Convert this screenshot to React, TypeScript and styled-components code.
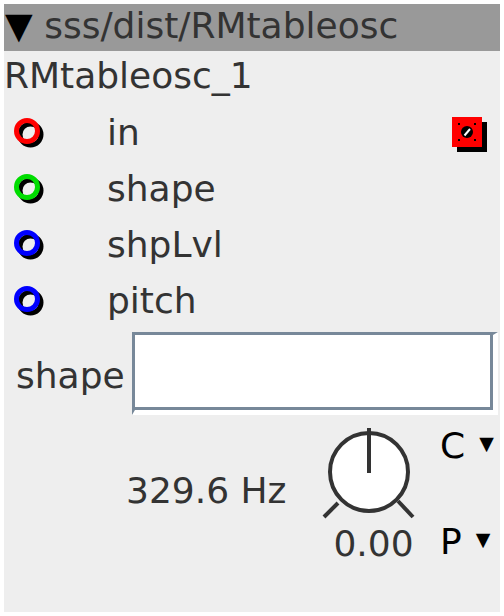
import React from "react";
import styled, { createGlobalStyle } from "styled-components";

const Global = createGlobalStyle`
  html, body { margin: 0; padding: 0; background: #ffffff; }
  body { font-family: "DejaVu Sans", "Liberation Sans", sans-serif; }
`;

const Page = styled.div`
  padding: 4px;
`;

const Panel = styled.div`
  width: 496px;
  height: 608px;
  background: #eeeeee;
  display: flex;
  flex-direction: column;
  font-family: "DejaVu Sans", sans-serif;
  font-size: 36px;
  color: #333333;
`;

const Header = styled.div`
  height: 47px;
  line-height: 43px;
  background: #999999;
  padding-left: 1px;
  white-space: nowrap;
`;

const Caret = styled.span`
  color: #000000;
`;

const InstanceName = styled.div`
  height: 54px;
  line-height: 49px;
  padding-left: 0;
`;

const PortRow = styled.div`
  height: 56px;
  display: flex;
  align-items: center;
  padding-left: 9px;
  position: relative;
`;

const PortLabel = styled.span`
  margin-left: 60px;
  line-height: 56px;
`;

const RingSvg = styled.svg`
  width: 34px;
  height: 34px;
  flex: none;
  position: relative;
  top: 1px;
`;

const OutletSvg = styled.svg`
  position: absolute;
  right: 12px;
  top: 12px;
  width: 36px;
  height: 36px;
`;

const InputRow = styled.div`
  display: flex;
  align-items: center;
  margin-top: 3px;
  padding-left: 12px;
`;

const InputLabel = styled.span`
  width: 116px;
  line-height: 40px;
  position: relative;
  top: 2px;
`;

const TextBox = styled.div`
  width: 358px;
  height: 75px;
  background: #ffffff;
  border-top: 3px solid #778899;
  border-left: 3px solid #778899;
  border-right: 5px solid #ffffff;
  border-bottom: 5px solid #ffffff;
  box-shadow: inset -3px -3px 0 0 #778899;
`;

const BottomRow = styled.div`
  display: flex;
  align-items: flex-start;
  padding-left: 122px;
  margin-top: 9px;
`;

const Freq = styled.div`
  width: 193px;
  line-height: 40px;
  margin-top: 47px;
  white-space: nowrap;
`;

const KnobCol = styled.div`
  width: 100px;
  display: flex;
  flex-direction: column;
  align-items: center;
`;

const KnobSvg = styled.svg`
  width: 100px;
  height: 96px;
  display: block;
`;

const KnobValue = styled.div`
  line-height: 40px;
  margin-top: 4px;
  padding-left: 9px;
`;

const SelCol = styled.div`
  margin-left: 21px;
  display: flex;
  flex-direction: column;
  gap: 56px;
  margin-top: 2px;
  color: #000000;
`;

const Sel = styled.div`
  line-height: 40px;
  white-space: nowrap;
  display: flex;
  align-items: flex-start;
`;

const SelArrow = styled.span`
  font-size: 19px;
  line-height: 19px;
  margin-left: 14px;
  margin-top: 8px;
`;

type Port = { name: string; color: string };

const ports: Port[] = [
  { name: "in", color: "#ff0000" },
  { name: "shape", color: "#00dd00" },
  { name: "shpLvl", color: "#0000ff" },
  { name: "pitch", color: "#0000ff" },
];

function Ring({ color }: { color: string }) {
  return (
    <RingSvg viewBox="0 0 34 34">
      <circle cx="17.5" cy="17.5" r="10.5" fill="none" stroke="#000" strokeWidth="5" />
      <circle cx="14" cy="14" r="10.5" fill="none" stroke={color} strokeWidth="5" />
    </RingSvg>
  );
}

function Outlet() {
  return (
    <OutletSvg viewBox="0 0 36 36">
      <rect x="5" y="5" width="30" height="30" fill="#000" />
      <rect x="0" y="0" width="30" height="30" fill="#ff0000" />
      <circle cx="15" cy="15" r="6" fill="#000" />
      <path d="M12.5 18.5 L18 12" stroke="#fff" strokeWidth="2" />
      <rect x="6" y="6" width="2" height="2" fill="#000" />
      <rect x="22" y="6" width="2" height="2" fill="#000" />
      <rect x="6" y="22" width="2" height="2" fill="#000" />
      <rect x="22" y="22" width="2" height="2" fill="#000" />
    </OutletSvg>
  );
}

function Knob() {
  return (
    <KnobSvg viewBox="0 0 100 96">
      <circle cx="50" cy="48" r="39" fill="#fff" stroke="#333" strokeWidth="4" />
      <line x1="50" y1="4" x2="50" y2="49" stroke="#333" strokeWidth="4" />
      <line x1="19" y1="79" x2="5" y2="93" stroke="#333" strokeWidth="4" />
      <line x1="79" y1="77" x2="94" y2="93" stroke="#333" strokeWidth="4" />
    </KnobSvg>
  );
}

export default function App() {
  return (
    <>
      <Global />
      <Page>
        <Panel>
          <Header>
            <Caret>▼</Caret> sss/dist/RMtableosc
          </Header>
          <InstanceName>RMtableosc_1</InstanceName>
          {ports.map((p, i) => (
            <PortRow key={p.name}>
              <Ring color={p.color} />
              <PortLabel>{p.name}</PortLabel>
              {i === 0 && <Outlet />}
            </PortRow>
          ))}
          <InputRow>
            <InputLabel>shape</InputLabel>
            <TextBox />
          </InputRow>
          <BottomRow>
            <Freq>329.6 Hz</Freq>
            <KnobCol>
              <Knob />
              <KnobValue>0.00</KnobValue>
            </KnobCol>
            <SelCol>
              <Sel>
                C<SelArrow>▼</SelArrow>
              </Sel>
              <Sel>
                P<SelArrow>▼</SelArrow>
              </Sel>
            </SelCol>
          </BottomRow>
        </Panel>
      </Page>
    </>
  );
}
